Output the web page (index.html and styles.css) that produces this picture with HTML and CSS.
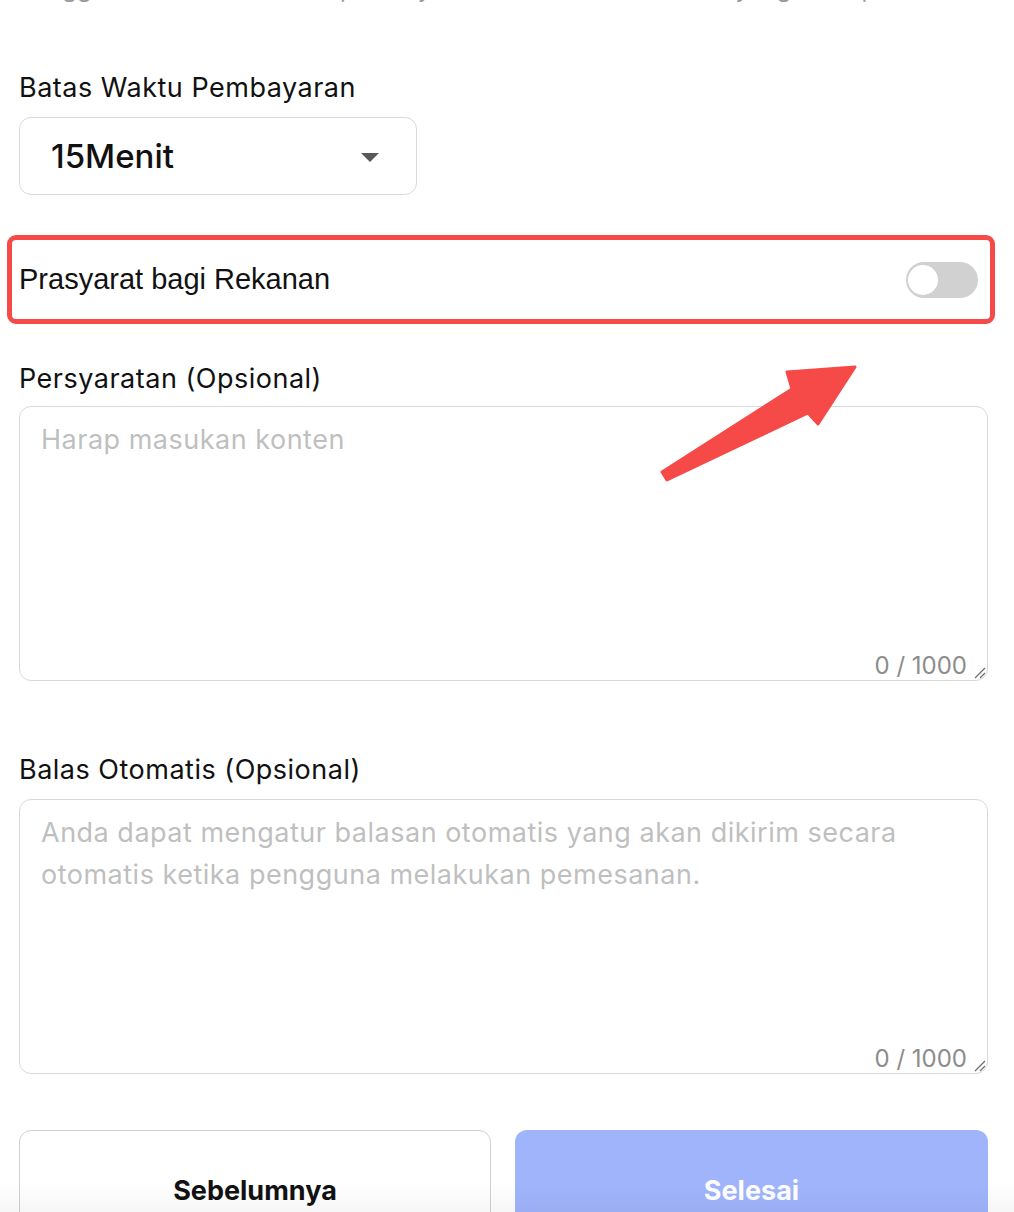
FILE: index.html
```html
<!DOCTYPE html>
<html lang="id">
<head>
<meta charset="utf-8">
<title>Pengaturan Iklan</title>
<link rel="stylesheet" href="styles.css">
</head>
<body>
<div class="page">
  <p class="note">Pengguna harus melakukan pembayaran sebelum batas waktu yang ditetapkan</p>

  <div class="field-label label-first">Batas Waktu Pembayaran</div>
  <div class="select">
    <span class="select-value">15Menit</span>
    <span class="caret"></span>
  </div>

  <div class="switch-row">
    <span class="switch-label">Prasyarat bagi Rekanan</span>
    <span class="switch"><span class="knob"></span></span>
  </div>

  <div class="field-label label-second">Persyaratan (Opsional)</div>
  <div class="textarea">
    <div class="placeholder">Harap masukan konten</div>
    <div class="counter">0 / 1000</div>
    <svg class="resize" width="16" height="16" viewBox="0 0 16 16"><path d="M15 5 L5 15 M15 10 L10 15" stroke="#6e6e6e" stroke-width="1.3" fill="none"/></svg>
  </div>

  <div class="field-label label-third">Balas Otomatis (Opsional)</div>
  <div class="textarea">
    <div class="placeholder">Anda dapat mengatur balasan otomatis yang akan dikirim secara otomatis ketika pengguna melakukan pemesanan.</div>
    <div class="counter">0 / 1000</div>
    <svg class="resize" width="16" height="16" viewBox="0 0 16 16"><path d="M15 5 L5 15 M15 10 L10 15" stroke="#6e6e6e" stroke-width="1.3" fill="none"/></svg>
  </div>

  <div class="actions">
    <button class="btn btn-prev">Sebelumnya</button>
    <button class="btn btn-done">Selesai</button>
  </div>
</div>

<svg class="arrow" width="1014" height="1212" viewBox="0 0 1014 1212">
  <polygon points="662,472 792,389 787,372 855,367 818,424 808,413 667,480" fill="#f54a48" stroke="#f54a48" stroke-width="3" stroke-linejoin="round"/>
</svg>
<div class="bottom-shade"></div>
</body>
</html>
```

FILE: styles.css
```css
html, body {
  margin: 0;
  padding: 0;
  background: #ffffff;
  overflow: hidden;
}

body {
  font-family: Inter, "Noto Sans", sans-serif;
  color: #111111;
  width: 1014px;
  height: 1212px;
  position: relative;
}

.page {
  padding: 0 26px 0 19px;
}

.note {
  margin: -27px 0 0;
  font-size: 24px;
  line-height: 32px;
  color: #999999;
  white-space: nowrap;
}

.field-label {
  font-size: 27px;
  letter-spacing: 0.5px;
  line-height: 36px;
  color: #111111;
}

.label-first { margin-top: 65px; }
.label-second { margin-top: 37px; }
.label-third { margin-top: 71px; }

.select {
  margin-top: 11px;
  width: 398px;
  height: 78px;
  box-sizing: border-box;
  border: 1.5px solid #d9d9d9;
  border-radius: 12px;
  display: flex;
  align-items: center;
  justify-content: space-between;
  padding: 0 37px 0 31px;
}

.select-value {
  font-size: 33px;
  font-weight: 500;
  color: #111111;
}

.caret {
  width: 0;
  height: 0;
  border-left: 9px solid transparent;
  border-right: 9px solid transparent;
  border-top: 9px solid #595959;
  margin-top: 2px;
}

.switch-row {
  margin: 40px -7px 0 -12px;
  height: 89px;
  box-sizing: border-box;
  border: 5px solid #f54a48;
  border-radius: 9px;
  display: flex;
  align-items: center;
  justify-content: space-between;
  padding: 0 12px 0 7px;
}

.switch-label {
  font-family: "Liberation Sans", Arial, sans-serif;
  font-size: 29px;
  color: #111111;
}

.switch {
  width: 72px;
  height: 36px;
  border-radius: 18px;
  background: #d1d1d1;
  display: flex;
  align-items: center;
  padding-left: 2px;
  box-sizing: border-box;
}

.knob {
  width: 30px;
  height: 30px;
  border-radius: 50%;
  background: #ffffff;
}

.textarea {
  margin-top: 9px;
  height: 275px;
  box-sizing: border-box;
  border: 1.5px solid #d9d9d9;
  border-radius: 12px;
  position: relative;
  padding: 12px 20px 0 21px;
}

.label-third + .textarea { margin-top: 11px; }

.placeholder {
  font-size: 27px;
  letter-spacing: 0.5px;
  line-height: 42px;
  color: #bfbfbf;
}

.counter {
  position: absolute;
  right: 20px;
  bottom: -2px;
  font-size: 24px;
  line-height: 32px;
  color: #8c8c8c;
}

.resize {
  position: absolute;
  right: 1px;
  bottom: 1px;
}

.actions {
  margin-top: 56px;
  display: grid;
  grid-template-columns: 472px 473px;
  column-gap: 24px;
}

.btn {
  height: 120px;
  border-radius: 12px;
  font-family: Inter, "Liberation Sans", sans-serif;
  font-size: 27px;
  font-weight: 700;
  padding: 0;
  box-sizing: border-box;
}

.btn-prev {
  background: #ffffff;
  border: 1.5px solid #d0d0d0;
  color: #111111;
}

.btn-done {
  background: #a0b4fc;
  border: none;
  color: #ffffff;
}

.arrow {
  position: absolute;
  left: 0;
  top: 0;
  pointer-events: none;
}

.bottom-shade {
  position: absolute;
  left: 0;
  right: 0;
  bottom: 0;
  height: 30px;
  background: linear-gradient(to bottom, rgba(0,0,0,0), rgba(0,0,0,0.035));
  pointer-events: none;
}
```
